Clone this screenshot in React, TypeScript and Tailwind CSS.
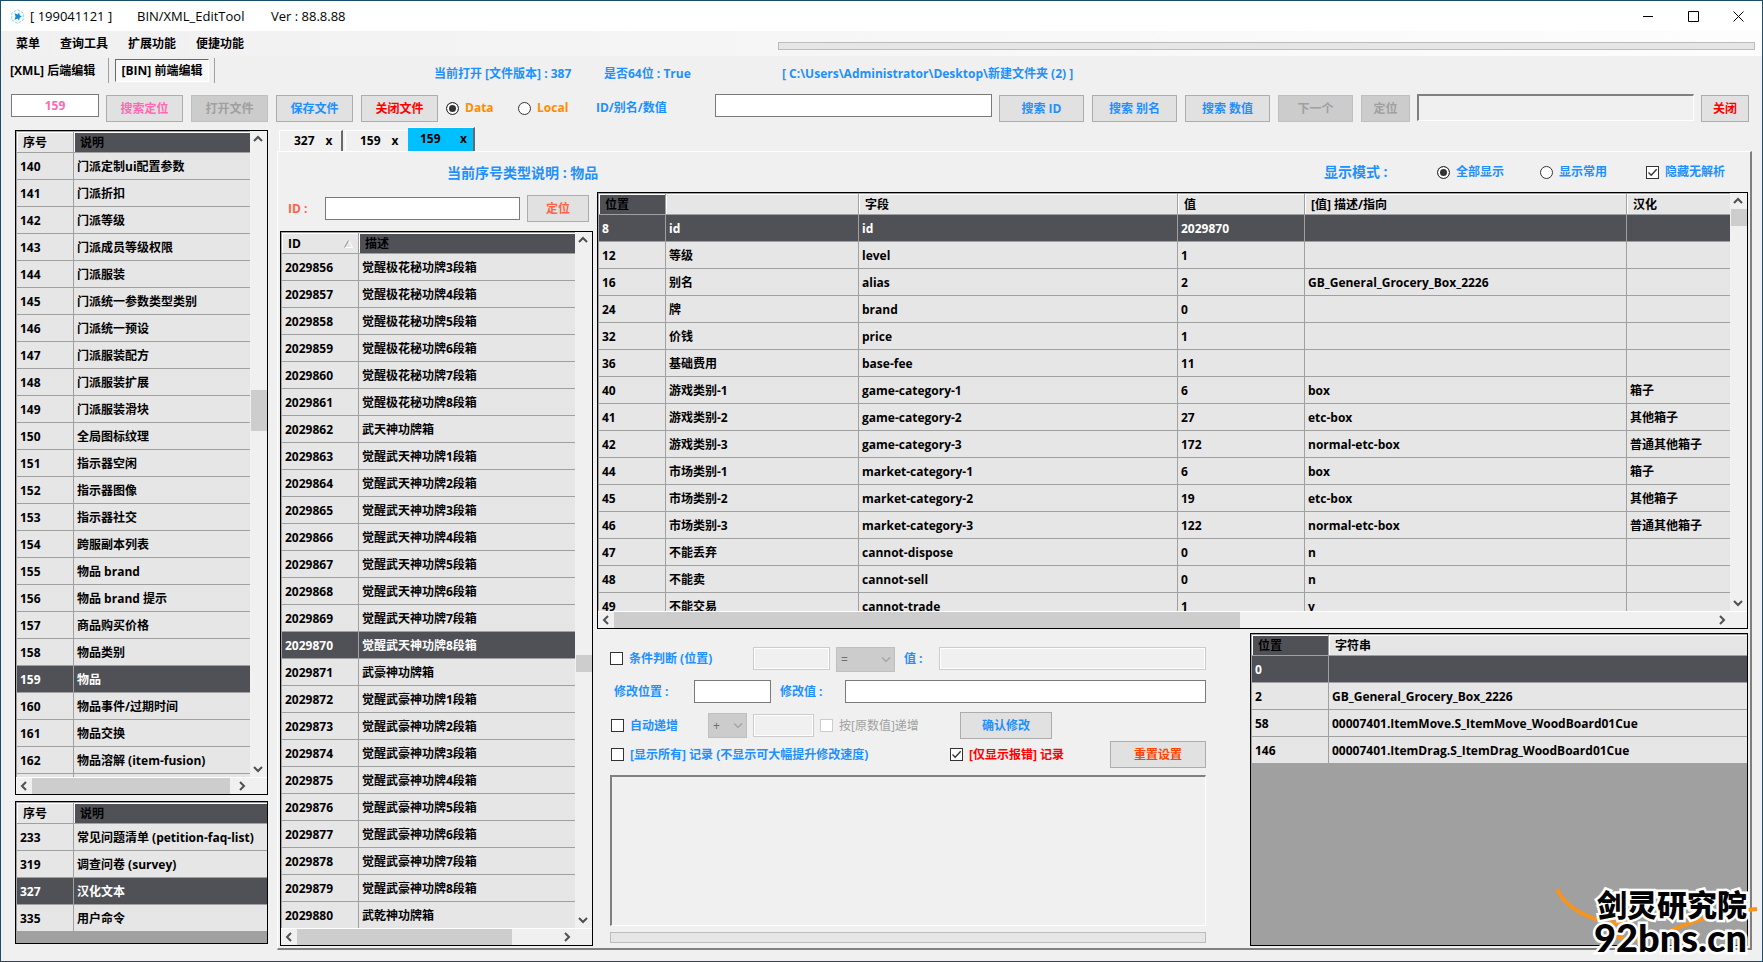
import type { ReactNode } from 'react';
import clsx from 'clsx';

type Column = { title: string; width?: string; active?: boolean; sort?: boolean };
type Thumb = { start: number; size: number };

const typeRows = [
  ['140', '门派定制ui配置参数'],
  ['141', '门派折扣'],
  ['142', '门派等级'],
  ['143', '门派成员等级权限'],
  ['144', '门派服装'],
  ['145', '门派统一参数类型类别'],
  ['146', '门派统一预设'],
  ['147', '门派服装配方'],
  ['148', '门派服装扩展'],
  ['149', '门派服装滑块'],
  ['150', '全局图标纹理'],
  ['151', '指示器空闲'],
  ['152', '指示器图像'],
  ['153', '指示器社交'],
  ['154', '跨服副本列表'],
  ['155', '物品 brand'],
  ['156', '物品 brand 提示'],
  ['157', '商品购买价格'],
  ['158', '物品类别'],
  ['159', '物品'],
  ['160', '物品事件/过期时间'],
  ['161', '物品交换'],
  ['162', '物品溶解 (item-fusion)'],
  ['', ''],
];

const favoriteRows = [
  ['233', '常见问题清单 (petition-faq-list)'],
  ['319', '调查问卷 (survey)'],
  ['327', '汉化文本'],
  ['335', '用户命令'],
];

const itemRows = [
  ['2029856', '觉醒极花秘功牌3段箱'],
  ['2029857', '觉醒极花秘功牌4段箱'],
  ['2029858', '觉醒极花秘功牌5段箱'],
  ['2029859', '觉醒极花秘功牌6段箱'],
  ['2029860', '觉醒极花秘功牌7段箱'],
  ['2029861', '觉醒极花秘功牌8段箱'],
  ['2029862', '武天神功牌箱'],
  ['2029863', '觉醒武天神功牌1段箱'],
  ['2029864', '觉醒武天神功牌2段箱'],
  ['2029865', '觉醒武天神功牌3段箱'],
  ['2029866', '觉醒武天神功牌4段箱'],
  ['2029867', '觉醒武天神功牌5段箱'],
  ['2029868', '觉醒武天神功牌6段箱'],
  ['2029869', '觉醒武天神功牌7段箱'],
  ['2029870', '觉醒武天神功牌8段箱'],
  ['2029871', '武豪神功牌箱'],
  ['2029872', '觉醒武豪神功牌1段箱'],
  ['2029873', '觉醒武豪神功牌2段箱'],
  ['2029874', '觉醒武豪神功牌3段箱'],
  ['2029875', '觉醒武豪神功牌4段箱'],
  ['2029876', '觉醒武豪神功牌5段箱'],
  ['2029877', '觉醒武豪神功牌6段箱'],
  ['2029878', '觉醒武豪神功牌7段箱'],
  ['2029879', '觉醒武豪神功牌8段箱'],
  ['2029880', '武乾神功牌箱'],
];

const fieldRows = [
  ['8', 'id', 'id', '2029870', '', ''],
  ['12', '等级', 'level', '1', '', ''],
  ['16', '别名', 'alias', '2', 'GB_General_Grocery_Box_2226', ''],
  ['24', '牌', 'brand', '0', '', ''],
  ['32', '价钱', 'price', '1', '', ''],
  ['36', '基础费用', 'base-fee', '11', '', ''],
  ['40', '游戏类别-1', 'game-category-1', '6', 'box', '箱子'],
  ['41', '游戏类别-2', 'game-category-2', '27', 'etc-box', '其他箱子'],
  ['42', '游戏类别-3', 'game-category-3', '172', 'normal-etc-box', '普通其他箱子'],
  ['44', '市场类别-1', 'market-category-1', '6', 'box', '箱子'],
  ['45', '市场类别-2', 'market-category-2', '19', 'etc-box', '其他箱子'],
  ['46', '市场类别-3', 'market-category-3', '122', 'normal-etc-box', '普通其他箱子'],
  ['47', '不能丢弃', 'cannot-dispose', '0', 'n', ''],
  ['48', '不能卖', 'cannot-sell', '0', 'n', ''],
  ['49', '不能交易', 'cannot-trade', '1', 'y', ''],
];

const stringRows = [
  ['0', ''],
  ['2', 'GB_General_Grocery_Box_2226'],
  ['58', '00007401.ItemMove.S_ItemMove_WoodBoard01Cue'],
  ['146', '00007401.ItemDrag.S_ItemDrag_WoodBoard01Cue'],
];

function Arrow({ dir }: { dir: 'up' | 'down' | 'left' | 'right' }) {
  const d = {
    up: 'M1 7 L5 3 L9 7',
    down: 'M1 3 L5 7 L9 3',
    left: 'M7 1 L3 5 L7 9',
    right: 'M3 1 L7 5 L3 9',
  }[dir];
  return (
    <button type="button" aria-label={dir} className="flex size-4 shrink-0 items-center justify-center">
      <svg width="10" height="10" viewBox="0 0 10 10" fill="none" stroke="#505050" strokeWidth="2">
        <path d={d} />
      </svg>
    </button>
  );
}

function VScroll({ thumb }: { thumb: Thumb }) {
  return (
    <div className="flex w-[17px] shrink-0 flex-col bg-[#f0f0f0]">
      <Arrow dir="up" />
      <div className="min-h-0 flex-1 pl-px">
        <div style={{ height: `${thumb.start}%` }} />
        <div className="bg-[#cdcdcd]" style={{ height: `${thumb.size}%` }} />
      </div>
      <Arrow dir="down" />
    </div>
  );
}

function HScroll({ thumb }: { thumb: Thumb }) {
  return (
    <div className="flex h-[17px] shrink-0 border-t border-white bg-[#f0f0f0] pr-[17px]">
      <Arrow dir="left" />
      <div className="flex min-w-0 flex-1">
        <div className="bg-[#cdcdcd]" style={{ width: `${thumb.size}%`, marginLeft: `${thumb.start}%` }} />
      </div>
      <Arrow dir="right" />
    </div>
  );
}

type GridProps = {
  columns: Column[];
  rows: string[][];
  selected: number;
  v?: Thumb;
  h?: Thumb;
  className?: string;
};

function DataGrid({ columns, rows, selected, v, h, className }: GridProps) {
  return (
    <div className={clsx('flex min-h-0 flex-col border border-black bg-[#a0a0a0]', className)}>
      <div className="flex min-h-0 flex-1">
        <div className="min-w-0 flex-1 overflow-hidden border-t border-l border-[#a0a0a0]">
          <table className="w-full table-fixed border-separate border-spacing-0 text-left whitespace-nowrap">
            <colgroup>
              {columns.map((c, i) => (
                <col key={i} className={c.width} />
              ))}
            </colgroup>
            <thead>
              <tr>
                {columns.map((c, i) => (
                  <th
                    key={i}
                    className={clsx(
                      'h-[21px] border-r border-b border-[#a0a0a0] p-0 pt-[2px] pl-[6px] leading-4 font-bold shadow-[inset_1px_1px_0_white]',
                      c.active ? 'bg-[#505156]' : 'bg-[#e6e6e6]',
                      i === columns.length - 1 && 'border-r-0',
                    )}
                  >
                    <div className="flex items-center justify-between">
                      {c.title}
                      {c.sort && (
                        <svg className="mr-[5px]" width="9" height="8" viewBox="0 0 9 8" fill="none">
                          <path d="M4.500 0.500 L8.500 7.500 H0.500" stroke="#fff" />
                          <path d="M4.500 0.500 L0.500 7.500" stroke="#8c8c8c" />
                        </svg>
                      )}
                    </div>
                  </th>
                ))}
              </tr>
            </thead>
            <tbody>
              {rows.map((row, r) => (
                <tr key={r} className={r === selected ? 'bg-[#505156] text-white' : 'bg-[#e6e6e6]'}>
                  {row.map((cell, i) => (
                    <td
                      key={i}
                      className={clsx(
                        'h-[27px] border-r border-b border-[#a0a0a0] p-0 pt-[2px] pl-[3px] leading-4',
                        i === row.length - 1 && 'border-r-0',
                      )}
                    >
                      {cell}
                    </td>
                  ))}
                </tr>
              ))}
            </tbody>
          </table>
        </div>
        {v && <VScroll thumb={v} />}
      </div>
      {h && <HScroll thumb={h} />}
    </div>
  );
}

function Button({ children, className, disabled }: { children: ReactNode; className?: string; disabled?: boolean }) {
  return (
    <button
      type="button"
      disabled={disabled}
      className={clsx(
        'h-[27px] shrink-0 border font-bold',
        disabled ? 'border-[#bfbfbf] bg-[#cccccc] text-[#a0a0a0]' : 'border-[#adadad] bg-[#e1e1e1]',
        className,
      )}
    >
      {children}
    </button>
  );
}

function TextBox({ label, className, disabled, value }: { label: string; className?: string; disabled?: boolean; value?: string }) {
  return (
    <input
      type="text"
      aria-label={label}
      defaultValue={value}
      disabled={disabled}
      className={clsx(
        'h-[23px] min-w-0 border px-1 font-bold outline-none',
        disabled ? 'border-[#cccccc] bg-[#f0f0f0] shadow-[inset_0_0_0_1px_white]' : 'border-[#7a7a7a] bg-white',
        className,
      )}
    />
  );
}

function CheckBox({ children, checked, disabled, className }: { children: ReactNode; checked?: boolean; disabled?: boolean; className?: string }) {
  return (
    <label className={clsx('flex shrink-0 items-center gap-[6px] whitespace-nowrap', className)}>
      <span className="relative flex">
        <input
          type="checkbox"
          defaultChecked={checked}
          disabled={disabled}
          className="peer size-[13px] appearance-none border border-[#333] bg-white disabled:border-[#cccccc]"
        />
        <svg className="pointer-events-none absolute inset-0 hidden peer-checked:block" width="13" height="13" viewBox="0 0 13 13" fill="none" stroke="#333" strokeWidth="1.3">
          <path d="M2.500 6.500 L5.200 9.300 L10.700 3.200" />
        </svg>
      </span>
      {children}
    </label>
  );
}

function Radio({ children, name, checked, className }: { children: ReactNode; name: string; checked?: boolean; className?: string }) {
  return (
    <label className={clsx('flex shrink-0 items-center gap-[6px] whitespace-nowrap', className)}>
      <input
        type="radio"
        name={name}
        defaultChecked={checked}
        className="size-[13px] appearance-none rounded-full border border-[#333] bg-white checked:bg-[#333] checked:shadow-[inset_0_0_0_2px_white]"
      />
      {children}
    </label>
  );
}

function OpSelect({ value, label, className }: { value: string; label: string; className?: string }) {
  return (
    <div className={clsx('relative shrink-0', className)}>
      <select disabled aria-label={label} className="h-[25px] w-full appearance-none border border-[#bfbfbf] bg-[#cccccc] pl-1 font-normal text-[#6d6d6d] opacity-100">
        <option>{value}</option>
      </select>
      <svg className="pointer-events-none absolute top-[9px] right-[4px]" width="10" height="8" viewBox="0 0 10 8" fill="none" stroke="#a0a0a0" strokeWidth="1.2">
        <path d="M1 1.500 L5 5.500 L9 1.500" />
      </svg>
    </div>
  );
}

function TitleBar() {
  return (
    <header className="flex h-[30px] shrink-0 items-center bg-white pr-[18px] pl-[10px] text-[13px] font-normal">
      <svg width="13" height="15" viewBox="0 0 13 15" fill="none">
        <path d="M6.500 0.700 L12.200 4 V11 L6.500 14.300 L0.800 11 V4 Z" stroke="#8fd0f0" strokeDasharray="3 1" />
        <path d="M3.500 4 L6.500 5.500 L8 3.500 L8.800 6.300 L10.800 7.500 L8.800 8.700 L8 11.500 L6.500 9.500 L3.500 11 L4.500 7.500 Z" fill="#1590d8" />
      </svg>
      <span className="ml-[6px] w-[107px]">[ 199041121 ]</span>
      <span className="w-[134px]">BIN/XML_EditTool</span>
      <span>Ver : 88.8.88</span>
      <div className="ml-auto flex items-center gap-[34px]">
        <button type="button" aria-label="最小化">
          <svg width="11" height="11" viewBox="0 0 11 11" stroke="#000"><path d="M0 5.500 H10" /></svg>
        </button>
        <button type="button" aria-label="最大化">
          <svg width="11" height="11" viewBox="0 0 11 11" fill="none" stroke="#000"><path d="M0.500 0.500 H10.500 V10.500 H0.500 Z" /></svg>
        </button>
        <button type="button" aria-label="关闭窗口">
          <svg width="11" height="11" viewBox="0 0 11 11" stroke="#000"><path d="M0.500 0.500 L10.500 10.500 M10.500 0.500 L0.500 10.500" /></svg>
        </button>
      </div>
    </header>
  );
}

function MenuBar() {
  return (
    <div className="flex h-[25px] shrink-0 items-center bg-linear-to-r from-[#f0f0f0] to-[#fdfdfd] pr-[7px] pl-[15px]">
      <nav className="flex w-[762px] gap-5">
        {['菜单', '查询工具', '扩展功能', '便捷功能'].map((m) => (
          <button key={m} type="button">{m}</button>
        ))}
      </nav>
      <div className="mt-[5px] h-2 flex-1 border border-[#bcbcbc] bg-[#e6e6e6]" />
    </div>
  );
}

function ModeRow() {
  return (
    <div className="flex h-[38px] shrink-0 items-start text-[#1e90ff]">
      <div className="mt-[2px] flex h-[25px] w-[433px] items-center pl-[9px] text-black">
        <button type="button" className="w-[98px] text-left">[XML] 后端编辑</button>
        <div className="h-full w-px bg-[#a0a0a0]" />
        <button type="button" className="ml-[6px] h-[23px] w-[94px] border border-t-[#696969] border-r-white border-b-white border-l-[#696969] bg-[#f8f8f8]">
          [BIN] 前端编辑
        </button>
        <div className="ml-[5px] h-full w-px bg-[#a0a0a0]" />
      </div>
      <span className="mt-[10px] w-[170px] leading-4">当前打开 [文件版本] : 387</span>
      <span className="mt-[10px] w-[178px] leading-4">是否64位 : True</span>
      <span className="mt-[10px] leading-4">[ C:\Users\Administrator\Desktop\新建文件夹 (2) ]</span>
    </div>
  );
}

function Toolbar() {
  return (
    <div className="flex h-7 shrink-0 items-end pr-[13px] pl-[10px] text-[#1e90ff]">
      <TextBox label="序号" value="159" className="w-[88px] self-start text-center text-[#ff69b4]" />
      <Button className="ml-[7px] w-[77px] text-[#ff69b4]">搜索定位</Button>
      <Button disabled className="ml-2 w-[77px]">打开文件</Button>
      <Button className="ml-2 w-[77px]">保存文件</Button>
      <Button className="ml-2 w-[77px] text-[#ff0000]">关闭文件</Button>
      <Radio name="source" checked className="ml-2 w-[72px] self-center text-[#ff8c00]">Data</Radio>
      <Radio name="source" className="w-[78px] self-center text-[#ff8c00]">Local</Radio>
      <label htmlFor="search" className="w-[119px] self-center">ID/别名/数值</label>
      <input id="search" type="text" className="h-[23px] w-[277px] self-start border border-[#7a7a7a] bg-white px-1" />
      <Button className="ml-[7px] w-[85px]">搜索 ID</Button>
      <Button className="ml-2 w-[85px]">搜索 别名</Button>
      <Button className="ml-2 w-[85px]">搜索 数值</Button>
      <Button disabled className="ml-2 w-[75px]">下一个</Button>
      <Button disabled className="ml-2 w-[49px]">定位</Button>
      <div className="ml-[7px] h-[27px] flex-1 self-start border-t-2 border-r border-b border-l-2 border-t-[#808080] border-r-white border-b-white border-l-[#808080]" />
      <Button className="ml-[7px] w-12 text-[#ff0000]">关闭</Button>
    </div>
  );
}

function BatchForm() {
  return (
    <section className="flex w-[653px] shrink-0 flex-col pt-[14px] pr-[44px] pb-[3px] pl-[13px] text-[#1e90ff]">
      <div className="flex h-[25px] items-start">
        <CheckBox className="h-[23px] w-[143px]">条件判断 (位置)</CheckBox>
        <TextBox disabled label="条件位置" className="w-[77px]" />
        <OpSelect value="=" label="比较" className="ml-[6px] w-[59px]" />
        <label htmlFor="cond-value" className="ml-[9px] w-[35px] leading-[23px]">值 :</label>
        <input id="cond-value" disabled className="h-[23px] min-w-0 flex-1 border border-[#cccccc] shadow-[inset_0_0_0_1px_white]" />
      </div>
      <div className="mt-2 flex h-[23px] items-center">
        <label htmlFor="edit-pos" className="w-[84px] pl-1">修改位置 :</label>
        <input id="edit-pos" className="h-[23px] w-[77px] border border-[#7a7a7a] bg-white px-1" />
        <label htmlFor="edit-value" className="ml-[9px] w-[65px]">修改值 :</label>
        <input id="edit-value" className="h-[23px] min-w-0 flex-1 border border-[#7a7a7a] bg-white px-1" />
      </div>
      <div className="mt-[9px] flex h-[27px] items-center">
        <CheckBox className="w-[98px] pl-px">自动递增</CheckBox>
        <OpSelect value="+" label="运算" className="w-[39px]" />
        <TextBox disabled label="递增值" className="ml-[6px] w-[61px]" />
        <CheckBox disabled className="ml-[6px] w-[140px] font-normal text-[#a0a0a0]">按[原数值]递增</CheckBox>
        <Button className="w-[92px]">确认修改</Button>
      </div>
      <div className="mt-[2px] flex h-[27px] items-center">
        <CheckBox className="w-[340px] pl-px">[显示所有] 记录 (不显示可大幅提升修改速度)</CheckBox>
        <CheckBox checked className="text-[#ff0000]">[仅显示报错] 记录</CheckBox>
        <Button className="ml-auto w-[96px] text-[#ff4500]">重置设置</Button>
      </div>
      <textarea
        readOnly
        aria-label="记录"
        className="mt-[7px] min-h-0 flex-1 resize-none border-t-2 border-r border-b border-l-2 border-t-[#808080] border-r-white border-b-white border-l-[#808080] outline-none"
      />
      <div className="mt-[6px] h-[11px] border border-[#bcbcbc] bg-[#e6e6e6]" />
    </section>
  );
}

function DocTabs() {
  const idle = 'flex h-[21px] items-center border-t border-l border-white text-black';
  return (
    <div className="flex h-6 shrink-0 items-end pl-[2px]">
      <button type="button" className={clsx(idle, 'w-[64px] gap-[11px] border-r-2 border-r-[#696969] pl-[14px]')}>
        <span>327</span><span>x</span>
      </button>
      <button type="button" className={clsx(idle, 'ml-[2px] w-[63px] gap-[11px] pl-[14px]')}>
        <span>159</span><span>x</span>
      </button>
      <button type="button" className="flex h-6 w-[67px] items-center justify-between border-t border-r-2 border-t-white border-r-[#696969] bg-[#00bfff] pr-[6px] pb-[2px] pl-[12px]">
        <span>159</span><span>x</span>
      </button>
    </div>
  );
}

function Watermark() {
  return (
    <div className="pointer-events-none absolute right-[4px] bottom-0 h-[74px] w-[204px]">
      <svg className="absolute inset-0" width="204" height="74" viewBox="0 0 204 74" fill="none" stroke="#f7941d" strokeWidth="4">
        <path d="M3 2 C10 18 32 34 64 36" />
        <path d="M50 32 C56 48 70 56 84 52 M56 36 C68 37 74 34 80 29" />
        <path d="M116 44 C140 34 160 26 203 22" />
      </svg>
      <div className="absolute right-[11px] bottom-2 text-right font-['Noto_Sans_CJK_SC',sans-serif] font-black text-black [-webkit-text-stroke:5px_white] [paint-order:stroke]">
        <div className="text-[30px] leading-9">剑灵研究院</div>
        <div className="font-[Lato,sans-serif] text-[38px] leading-8">92bns.cn</div>
      </div>
    </div>
  );
}

export default function App() {
  return (
    <div className="relative flex h-screen flex-col overflow-hidden border border-[#1b4d6b] bg-[#f0f0f0] font-['Open_Sans','Noto_Sans_CJK_SC',sans-serif] text-[12px] leading-4 font-bold text-black">
      <TitleBar />
      <MenuBar />
      <ModeRow />
      <Toolbar />
      <main className="flex min-h-0 flex-1 gap-[9px] pr-[10px] pl-[14px]">
        <aside className="flex w-[253px] shrink-0 flex-col gap-[6px] pt-2 pb-[17px]">
          <DataGrid
            className="flex-1"
            columns={[{ title: '序号', width: 'w-[57px]' }, { title: '说明', active: true }]}
            rows={typeRows}
            selected={19}
            v={{ start: 39.6, size: 6.7 }}
            h={{ start: 0, size: 98 }}
          />
          <DataGrid
            className="h-[143px] shrink-0"
            columns={[{ title: '序号', width: 'w-[57px]' }, { title: '说明', active: true }]}
            rows={favoriteRows}
            selected={2}
          />
        </aside>

        <div className="flex min-w-0 flex-1 flex-col pt-[5px] pb-[11px]">
          <DocTabs />
          <div className="flex min-h-0 flex-1 gap-1 border-t border-r-2 border-b-2 border-l border-t-white border-r-[#808080] border-b-[#808080] border-l-white pr-[2px] pb-[2px] pl-[2px]">
            <div className="flex w-[313px] shrink-0 flex-col">
              <h2 className="mt-[11px] ml-[167px] h-8 text-[14px] leading-5 whitespace-nowrap text-[#1e90ff]">
                当前序号类型说明 : 物品
              </h2>
              <div className="flex h-[27px] items-center pl-2 text-[#ff6347]">
                <label htmlFor="goto-id" className="w-[37px]">ID :</label>
                <input id="goto-id" className="h-[23px] w-[195px] border border-[#7a7a7a] bg-white px-1" />
                <Button className="ml-[7px] w-[62px]">定位</Button>
              </div>
              <DataGrid
                className="mt-[9px] flex-1"
                columns={[{ title: 'ID', width: 'w-[77px]', sort: true }, { title: '描述', active: true }]}
                rows={itemRows}
                selected={14}
                v={{ start: 61.3, size: 2.6 }}
                h={{ start: 0, size: 82 }}
              />
            </div>

            <div className="flex min-w-0 flex-1 flex-col">
              <div className="flex h-10 shrink-0 items-center justify-end pr-[23px] text-[#1e90ff]">
                <span className="w-[113px] text-[14px]">显示模式 :</span>
                <Radio name="display" checked className="w-[103px]">全部显示</Radio>
                <Radio name="display" className="w-[106px]">显示常用</Radio>
                <CheckBox checked>隐藏无解析</CheckBox>
              </div>
              <DataGrid
                className="flex-1"
                columns={[
                  { title: '位置', width: 'w-[67px]', active: true },
                  { title: '', width: 'w-[193px]' },
                  { title: '字段', width: 'w-[319px]' },
                  { title: '值', width: 'w-[127px]' },
                  { title: '[值] 描述/指向', width: 'w-[322px]' },
                  { title: '汉化' },
                ]}
                rows={fieldRows}
                selected={0}
                v={{ start: 0, size: 4.4 }}
                h={{ start: 0, size: 56.9 }}
              />
              <div className="mt-1 flex h-[313px] shrink-0">
                <BatchForm />
                <DataGrid
                  className="min-w-0 flex-1"
                  columns={[{ title: '位置', width: 'w-[77px]', active: true }, { title: '字符串' }]}
                  rows={stringRows}
                  selected={0}
                />
              </div>
            </div>
          </div>
        </div>
      </main>
      <Watermark />
    </div>
  );
}
